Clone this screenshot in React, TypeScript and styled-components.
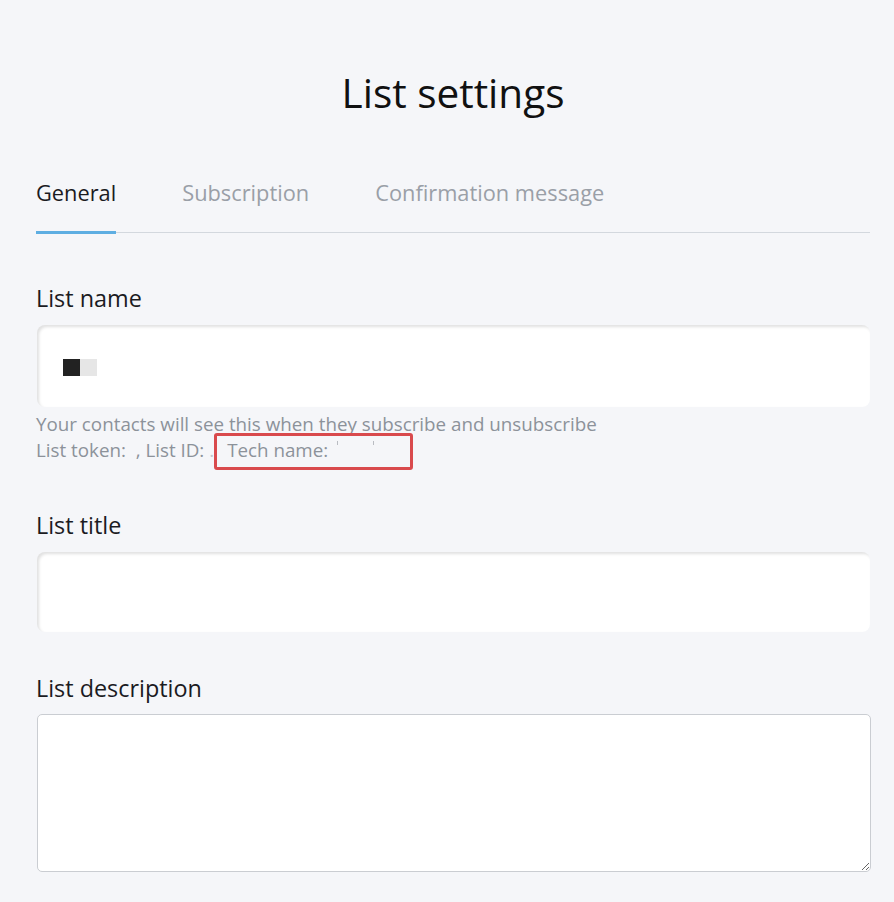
import styled, { createGlobalStyle } from "styled-components"
import { useState } from "react"

const GlobalStyle = createGlobalStyle`
    *, *::before, *::after {
        box-sizing: border-box;
    }
    body {
        margin: 0;
        background-color: #f5f6f9;
        font-family: "Open Sans", Lato, sans-serif;
        color: #1b1b1f;
    }
`

const tabs = ["General", "Subscription", "Confirmation message"]

export default function App() {

    const [activeTab, setActiveTab] = useState<number>(0)

    return (
        <>
            <GlobalStyle />
            <Page>
                <Title>List settings</Title>
                <TabBar>
                    {tabs.map((tab, i) => (
                        <Tab key={tab} active={activeTab === i} onClick={() => setActiveTab(i)}>
                            {tab}
                        </Tab>
                    ))}
                </TabBar>

                <Field top={51}>
                    <Label>List name</Label>
                    <InputBox>
                        <Redacted>
                            <Block shade="#222" />
                            <Block shade="#e6e6e6" />
                        </Redacted>
                    </InputBox>
                    <Help>
                        Your contacts will see this when they subscribe and unsubscribe
                        <br />
                        List token: &nbsp;, List ID: <Dot>.</Dot>
                        <Marked>Tech name: <Tick /> <Tick wide /></Marked>
                    </Help>
                </Field>

                <Field top={48}>
                    <Label>List title</Label>
                    <InputBox short />
                </Field>

                <Field top={42}>
                    <Label tight>List description</Label>
                    <TextArea />
                </Field>
            </Page>
        </>
    )
}

const Page = styled.div`
    min-height: 902px;
    padding: 66px 24px 30px 36px;
    border-left: 3px solid #fbfbfd;
    margin-left: -3px;
`

const Title = styled.h1`
    margin: 0;
    text-align: center;
    font-size: 40.5px;
    font-weight: 400;
    line-height: 54px;
    color: #111;
`

const TabBar = styled.div`
    display: flex;
    gap: 66px;
    margin-top: 59px;
    border-bottom: 1.5px solid #d3d8de;
`

const Tab = styled.div<{ active: boolean }>`
    font-size: 21.8px;
    line-height: 28px;
    padding-bottom: 24px;
    margin-bottom: -2px;
    cursor: pointer;
    color: ${props => props.active ? '#1b1b1f' : '#9a9fa7'};
    border-bottom: 3px solid ${props => props.active ? '#5eaee2' : 'transparent'};
`

const Field = styled.div<{ top: number }>`
    margin-top: ${props => props.top}px;
`

const Label = styled.div<{ tight?: boolean }>`
    font-size: 23.4px;
    line-height: 28px;
    margin-bottom: ${props => props.tight ? '12px' : '13px'};
    color: #1b1b1f;
`

const InputBox = styled.div<{ short?: boolean }>`
    height: ${props => props.short ? '80px' : '82px'};
    margin-left: 1px;
    background: #fff;
    border-radius: 8px;
    box-shadow: inset 2px 2px 3px rgba(0, 0, 0, 0.12);
    display: flex;
    align-items: center;
    padding-left: 26px;
`

const Redacted = styled.div`
    display: flex;
    margin-top: 2px;
`

const Block = styled.span<{ shade: string }>`
    display: block;
    width: 17px;
    height: 17px;
    background: ${props => props.shade};
`

const Help = styled.div`
    margin-top: 4px;
    font-size: 18.8px;
    line-height: 26px;
    color: #8c929a;
`

const Dot = styled.span`
    color: #c3c6cb;
`

const Marked = styled.span`
    position: relative;
    margin-left: 13px;

    &::after {
        content: "";
        position: absolute;
        left: -13px;
        top: -4px;
        width: 199px;
        height: 37px;
        border: 3px solid #d94a4d;
        border-radius: 3px;
    }
`

const Tick = styled.span<{ wide?: boolean }>`
    display: inline-block;
    width: 1px;
    height: 4px;
    vertical-align: top;
    margin-top: 4px;
    margin-left: ${props => props.wide ? '30px' : '4px'};
    background: #b9bcc2;
`

const TextArea = styled.textarea`
    display: block;
    width: 834px;
    height: 158px;
    margin-left: 1px;
    background: #fff;
    border: 1px solid #cacdd2;
    border-radius: 5px;
    resize: vertical;
    font-family: inherit;
`
